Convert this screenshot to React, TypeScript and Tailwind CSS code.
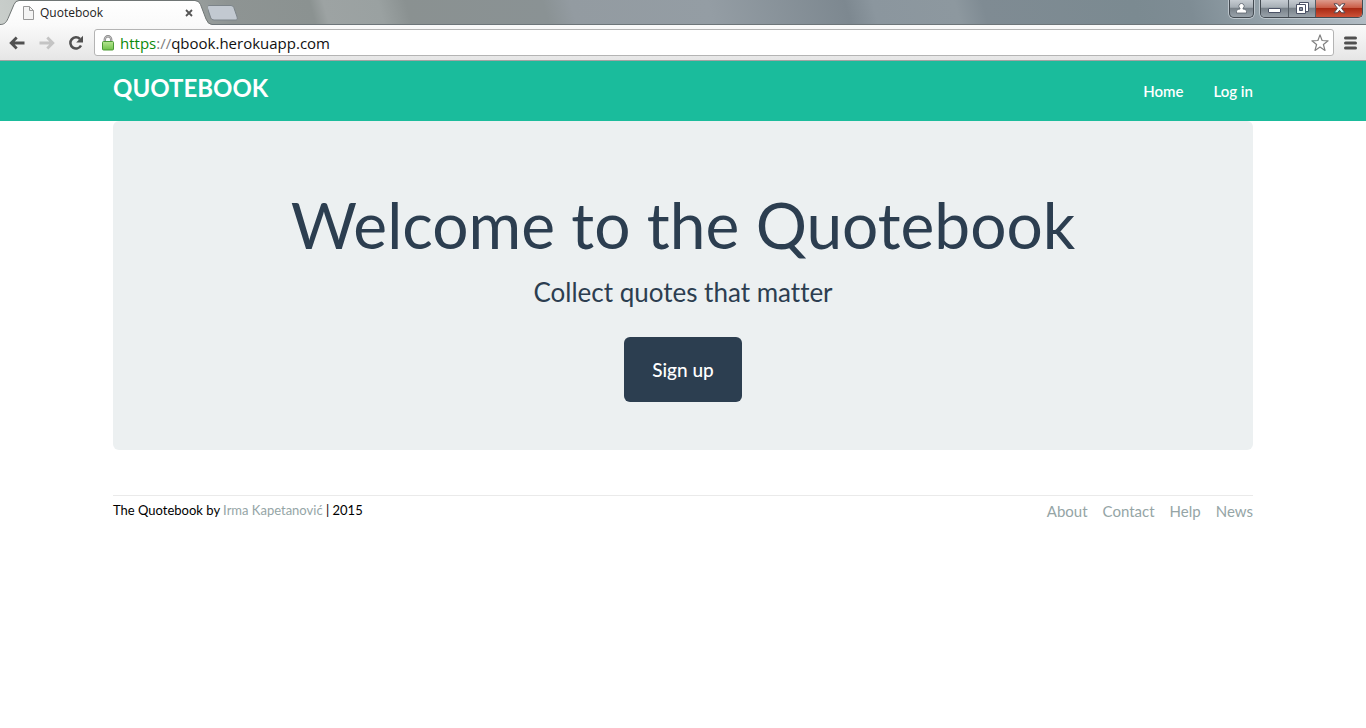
import type { ReactNode } from "react";

function TabStrip() {
  return (
    <div className="relative flex h-[25px] items-start justify-between bg-[linear-gradient(75deg,#c9cecb_0%,#b4bab7_8%,#8e9493_17%,#8b9291_23%,#9da3a3_24%,#9aa1a1_28%,#8a9191_30%,#8a9294_40%,#939ba1_42%,#949da4_52%,#7d8890_62%,#8b969e_64%,#8d989f_70%,#7f8b93_72%,#7b8a91_83%,#7e8c94_87%,#9ba8b0_94%,#b3bdc5_100%)]">
      <div className="absolute inset-x-0 bottom-0 h-px bg-[#6d7579]" />
      <div className="flex">
        <div className="relative flex h-[25px] w-[208px] items-center">
          <svg className="absolute inset-0" width="212" height="25" viewBox="0 0 212 25" aria-hidden="true">
            <defs>
              <linearGradient id="tab" x1="0" y1="0" x2="0" y2="1">
                <stop offset="0" stopColor="#ffffff" />
                <stop offset="1" stopColor="#fafafa" />
              </linearGradient>
            </defs>
            <path
              d="M0 25V24.5C4 24.5 6 23 8 18.5L14 4.500Q15.500 1 19 1H195Q199 1 200.500 4.500L206 19Q208 24.500 212 24.500V25Z"
              fill="url(#tab)"
            />
            <path
              d="M0 24.500C4 24.500 6 23 8 18.500L14 4.500Q15.500 .5 19 .5H195Q199 .5 200.500 4.500L206 19Q208 24.500 212 24.500"
              fill="none"
              stroke="#707675"
            />
          </svg>
          <div className="relative flex w-full items-center pr-[11px] pl-[23px]">
            <svg width="11" height="14" viewBox="0 0 11 14" aria-hidden="true">
              <path d="M.5.5h6l4 4v9H.5z" fill="#f4f4f4" stroke="#999" />
              <path d="M6.500.5v4h4" fill="none" stroke="#999" />
            </svg>
            <span className="ml-1.5 flex-1 font-['Open_Sans','Noto_Sans',sans-serif] text-xs leading-4 text-[#222]">
              Quotebook
            </span>
            <button type="button" aria-label="Close tab" className="p-1">
              <svg width="8" height="8" viewBox="0 0 8 8" aria-hidden="true">
                <path d="M1 1l6 6M7 1L1 7" stroke="#555" strokeWidth="1.800" />
              </svg>
            </button>
          </div>
        </div>
        <button type="button" aria-label="New tab" className="relative h-[25px] w-8">
          <svg width="32" height="25" viewBox="0 0 32 25" aria-hidden="true">
            <path
              d="M1 5.500h22q2 0 2.800 2l3.300 9.500q1 3-1 3H6q-2.500 0-3.200-2L-.7 7.500q-.6-2 1.700-2z"
              fill="#c2c9d1"
              stroke="#7c8489"
            />
          </svg>
        </button>
      </div>
      <WindowButtons />
    </div>
  );
}

function WindowButtons() {
  return (
    <div className="relative flex gap-1.5 pr-[3px]">
      <button
        type="button"
        aria-label="Profile"
        className="flex h-[18px] w-[25px] items-center justify-center rounded-b-[5px] border border-t-0 border-[#434a51] bg-[linear-gradient(#c6ccd2_0%,#a7afb6_42%,#79828a_50%,#99a2aa_100%)] shadow-[0_0_0_1px_#bcc5cc]"
      >
        <svg width="11" height="11" viewBox="0 0 11 11" aria-hidden="true">
          <path
            d="M5.500.5a2.600 2.600 0 0 1 1.700 4.600L6.900 6c2 .2 3.600 1 3.600 2.500V10H.5V8.500C.5 7 2.100 6.200 4.100 6l-.3-.9A2.600 2.600 0 0 1 5.500.5z"
            fill="#fff"
            stroke="#5b636d"
            strokeWidth=".8"
          />
        </svg>
      </button>
      <div className="flex h-[18px] w-[103px] overflow-hidden rounded-b-[5px] border border-t-0 border-[#434a51] shadow-[0_0_0_1px_#bcc5cc]">
        <button
          type="button"
          aria-label="Minimize"
          className="flex w-7 items-center justify-center border-r border-[#555d65] bg-[linear-gradient(#c6ccd2_0%,#a7afb6_42%,#79828a_50%,#99a2aa_100%)]"
        >
          <svg width="13" height="12" viewBox="0 0 13 12" aria-hidden="true">
            <rect x=".5" y="5.500" width="12" height="4" rx=".5" fill="#fff" stroke="#4b5266" />
          </svg>
        </button>
        <button
          type="button"
          aria-label="Restore"
          className="flex w-[27px] items-center justify-center border-r border-[#555d65] bg-[linear-gradient(#c6ccd2_0%,#a7afb6_42%,#79828a_50%,#99a2aa_100%)]"
        >
          <svg width="13" height="13" viewBox="0 0 13 13" aria-hidden="true">
            <path d="M3.500.5h9v9h-9z" fill="#fff" stroke="#4b5266" />
            <path d="M.5 2.500h9v9h-9z" fill="#fff" stroke="#4b5266" />
            <path d="M3.500 5.500h3v3h-3z" fill="#8b93a0" stroke="#4b5266" />
          </svg>
        </button>
        <button
          type="button"
          aria-label="Close"
          className="flex flex-1 items-center justify-center bg-[linear-gradient(#dd9b8c_0%,#cb5f49_44%,#a92a14_50%,#cd5238_100%)]"
        >
          <svg width="13" height="11" viewBox="0 0 13 11" aria-hidden="true">
            <path
              d="M1 .8h3.300l2.200 2.500L8.700.8H12L8.500 5.300 12 9.800H8.700L6.500 7.300 4.300 9.800H1l3.500-4.500z"
              fill="#fff"
              stroke="#55474f"
            />
          </svg>
        </button>
      </div>
    </div>
  );
}

function Toolbar() {
  return (
    <div className="flex h-9 items-center border-b border-[#a3a3a3] bg-linear-to-b from-[#fafafa] to-[#e6e6e6] px-[9px]">
      <button type="button" aria-label="Back" className="mr-3.5">
        <svg width="16" height="14" viewBox="0 0 16 14" aria-hidden="true">
          <path d="M15.500 7H3M7.700 1.500L2.200 7l5.500 5.500" fill="none" stroke="#505050" strokeWidth="2.800" />
        </svg>
      </button>
      <button type="button" aria-label="Forward" className="mr-3.5">
        <svg width="16" height="14" viewBox="0 0 16 14" aria-hidden="true">
          <path d="M.5 7H13M8.300 1.500L13.800 7l-5.500 5.500" fill="none" stroke="#c4c4c4" strokeWidth="2.800" />
        </svg>
      </button>
      <button type="button" aria-label="Reload" className="mr-2.5">
        <svg width="15" height="16" viewBox="0 0 15 16" aria-hidden="true">
          <path d="M11 4A5.600 5.600 0 1 0 12 10.500" fill="none" stroke="#505050" strokeWidth="2.500" />
          <path d="M14 .8v6.700H7.200z" fill="#505050" />
        </svg>
      </button>
      <div className="flex h-[27px] flex-1 items-center rounded-[3px] border border-[#b4b4b4] bg-white pr-1 pl-[7px]">
        <svg width="12" height="16" viewBox="0 0 12 16" aria-hidden="true">
          <defs>
            <linearGradient id="lock" x1="0" y1="0" x2="0" y2="1">
              <stop offset="0" stopColor="#b6e592" />
              <stop offset="1" stopColor="#70c24a" />
            </linearGradient>
          </defs>
          <path d="M2.800 7V4.500a3.200 3.200 0 0 1 6.400 0V7" fill="none" stroke="#8b8b8b" strokeWidth="2.400" />
          <path d="M2.800 7V4.500a3.200 3.200 0 0 1 6.400 0V7" fill="none" stroke="#d2d2d2" strokeWidth=".7" />
          <rect x=".5" y="6.500" width="11" height="8.500" rx="1" fill="url(#lock)" stroke="#4c9a35" />
        </svg>
        <div className="ml-1.5 flex-1 font-['Open_Sans','Noto_Sans',sans-serif] text-[15px] leading-5 text-[#111]">
          <span className="text-[#0b8a0b]">https</span>
          <span className="text-[#808080]">://</span>qbook.herokuapp.com
        </div>
        <button type="button" aria-label="Bookmark this page">
          <svg width="18" height="18" viewBox="0 0 18 18" aria-hidden="true">
            <path
              d="M9 .9l2.100 5.600 6 .3-4.700 3.700 1.600 5.900L9 13.100l-5 3.300 1.600-5.900L.9 6.800l6-.3z"
              fill="#fff"
              stroke="#808080"
              strokeWidth="1.200"
              strokeLinejoin="round"
            />
          </svg>
        </button>
      </div>
      <button type="button" aria-label="Menu" className="ml-2.5">
        <svg width="13" height="14" viewBox="0 0 13 14" aria-hidden="true">
          <path d="M1.500 2h10M1.500 7h10M1.500 12h10" stroke="#505050" strokeWidth="3" strokeLinecap="round" />
        </svg>
      </button>
    </div>
  );
}

function Container({ children }: { children: ReactNode }) {
  return <div className="mx-auto w-full max-w-[1170px] px-[15px]">{children}</div>;
}

const footerLinks = ["About", "Contact", "Help", "News"];

export default function App() {
  return (
    <div className="min-h-screen bg-white font-['Lato','Open_Sans',sans-serif] [font-variant-ligatures:none]">
      <TabStrip />
      <Toolbar />
      <header className="bg-[#1abc9c]">
        <Container>
          <div className="flex h-[60px] items-center justify-between">
            <a href="#" className="pb-1.5 text-2xl leading-8 font-bold text-white">
              QUOTEBOOK
            </a>
            <nav className="flex gap-[30px] text-[15px] leading-5 font-semibold text-white">
              <a href="#">Home</a>
              <a href="#">Log in</a>
            </nav>
          </div>
        </Container>
      </header>
      <Container>
        <main className="flex flex-col items-center rounded-md bg-[#ecf0f1] pt-[68px] pb-12 text-center text-[#2c3e50]">
          <h1 className="text-[64px] leading-[72px]">Welcome to the Quotebook</h1>
          <h2 className="mt-[15px] text-[26px] leading-8">Collect quotes that matter</h2>
          <a
            href="#"
            className="mt-[29px] rounded-md bg-[#2c3e50] px-7 py-5 text-[19px] leading-[25px] font-medium text-white"
          >
            Sign up
          </a>
        </main>
        <footer className="mt-[45px] flex items-start justify-between border-t border-[#eaeaea] pt-1">
          <small className="text-[13px] leading-5 text-black">
            The Quotebook by{" "}
            <a href="#" className="text-[#95a5a6]">
              Irma Kapetanović
            </a>{" "}
            | 2015
          </small>
          <ul className="flex gap-[15px] text-[15px] leading-[22px] text-[#95a5a6]">
            {footerLinks.map((label) => (
              <li key={label}>
                <a href="#">{label}</a>
              </li>
            ))}
          </ul>
        </footer>
      </Container>
    </div>
  );
}
